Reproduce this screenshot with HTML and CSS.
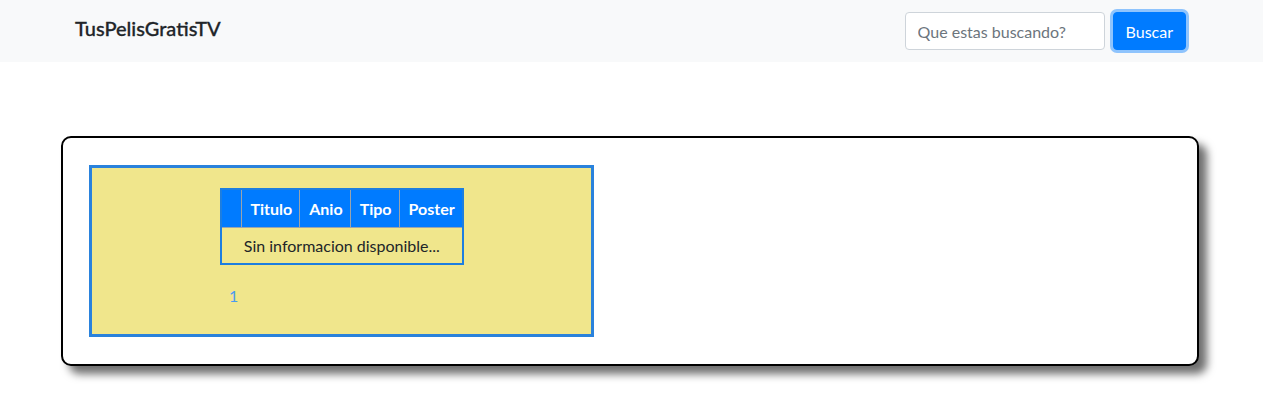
FILE: index.html
```html
<!DOCTYPE html>
<html lang="es">
<head>
<meta charset="utf-8">
<title>TusPelisGratisTV</title>
<link rel="stylesheet" href="styles.css">
</head>
<body>
<nav class="navbar">
  <div class="container nav-inner">
    <a class="brand" href="#">TusPelisGratisTV</a>
    <form class="search">
      <input class="search-input" type="search" placeholder="Que estas buscando?">
      <button class="search-btn" type="button">Buscar</button>
    </form>
  </div>
</nav>
<main class="container">
  <div class="card">
    <div class="panel">
      <table class="results">
        <thead>
          <tr><th class="col-idx"></th><th>Titulo</th><th>Anio</th><th>Tipo</th><th>Poster</th></tr>
        </thead>
        <tbody>
          <tr><td colspan="5">Sin informacion disponible...</td></tr>
        </tbody>
      </table>
      <div class="pager"><a class="page-link" href="#">1</a></div>
    </div>
  </div>
</main>
</body>
</html>
```
FILE: styles.css
```css
* { box-sizing: border-box; }
html, body { min-height: 100%; }
body {
  margin: 0;
  font-family: Lato, "Open Sans", sans-serif;
  font-size: 16px;
  color: #212529;
  background: #fff;
}
.container {
  width: 1141px;
  margin: 0 auto;
}
.navbar {
  background: #f8f9fa;
  height: 62px;
}
.nav-inner {
  display: flex;
  align-items: center;
  justify-content: space-between;
  height: 62px;
  padding: 0 16px 0 14px;
}
.brand {
  font-size: 20px;
  color: #212529;
  text-decoration: none;
  font-weight: 500;
  margin-top: -6px;
  -webkit-text-stroke: 0.3px #212529;
}
.search {
  display: flex;
  align-items: center;
  gap: 8px;
}
.search-input {
  width: 200px;
  height: 38px;
  border: 1px solid #ced4da;
  border-radius: 4px;
  padding: 6px 12px;
  font: inherit;
  color: #495057;
  background: #fff;
}
.search-input::placeholder { color: #6c757d; }
.search-btn {
  height: 38px;
  padding: 6px 12px;
  border: 1px solid #007bff;
  border-radius: 4px;
  background: #007bff;
  color: #fff;
  font: inherit;
  box-shadow: 0 0 0 3px rgba(38, 143, 255, 0.5);
}
main.container { padding: 74px 0 40px; }
.card {
  width: 1138px;
  border: 2px solid #000;
  border-radius: 10px;
  box-shadow: 8px 8px 9px #6f6f6f;
  padding: 27px 26px;
  background: #fff;
}
.panel {
  width: 505px;
  height: 172px;
  background: #f0e68c;
  border: 3px solid #2a82dc;
  padding: 20px 0 0 128px;
}
.results {
  border-collapse: collapse;
  border: 2px solid #1d7ee0;
}
.results th {
  background: #007bff;
  color: #fff;
  font-weight: 700;
  height: 38px;
  padding: 0 7px 0 9px;
  border-left: 1px solid #9aa4ad;
  border-bottom: 1px solid #9aa4ad;
  text-align: left;
}
.results th:first-child { border-left: none; }
.results .col-idx { width: 20px; padding: 0; }
.results td {
  height: 37px;
  text-align: center;
  padding: 0 8px;
}
.pager {
  margin-top: 21px;
  padding-left: 9px;
}
.page-link {
  color: #4a9af0;
  text-decoration: none;
}
```
